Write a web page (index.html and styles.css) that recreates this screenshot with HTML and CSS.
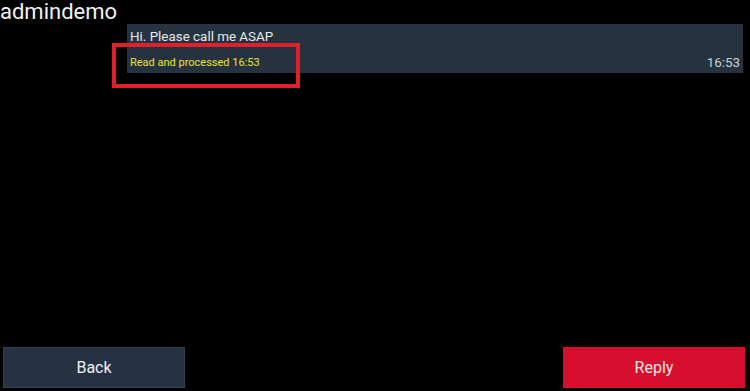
FILE: index.html
```html
<!DOCTYPE html>
<html lang="en">
<head>
    <meta charset="UTF-8">
    <meta name="viewport" content="width=device-width, initial-scale=1.0">
    <title>Message</title>
    <link rel="stylesheet" href="styles.css">
</head>
<body>
    <div class="screen">
        <h1 class="sender">admindemo</h1>

        <div class="thread">
            <div class="bubble">
                <div class="msg-text">Hi. Please call me ASAP</div>
                <div class="meta">
                    <span class="status">Read and processed 16:53</span>
                    <span class="time">16:53</span>
                </div>
                <!-- annotation box drawn over the status line -->
                <div class="highlight"></div>
            </div>
        </div>

        <div class="actions">
            <button class="btn btn-back">Back</button>
            <button class="btn btn-reply">Reply</button>
        </div>
    </div>
</body>
</html>
```

FILE: styles.css
```css
body {
    margin: 0;
    background-color: #000;
    font-family: Roboto, "Liberation Sans", Arial, sans-serif;
    color: #fff;
}
.screen {
    height: 391px;
    display: flex;
    flex-direction: column;
}
.sender {
    margin: 0;
    font-size: 22px;
    font-weight: normal;
    line-height: 24px;
    color: #f2f2f2;
}
.thread {
    padding: 0 7px 0 127px;
    flex: 1;
}
.bubble {
    position: relative;
    background-color: #27323f;
    padding: 4px 3px 3px 3px;
}
.msg-text {
    font-size: 13.4px;
    line-height: 17px;
    color: #e6e9ec;
}
.meta {
    display: flex;
    justify-content: space-between;
    align-items: flex-end;
    margin-top: 10px;
}
.status {
    font-size: 11px;
    line-height: 15px;
    color: #e8e62c;
}
.time {
    font-size: 13.4px;
    line-height: 15px;
    color: #c9d0d7;
}
.highlight {
    position: absolute;
    left: -15px;
    top: 19px;
    width: 180px;
    height: 37px;
    border: 4px solid #e2202b;
}
.actions {
    display: flex;
    justify-content: space-between;
    padding: 0 5px 3px 3px;
}
.btn {
    width: 182px;
    height: 41px;
    border: none;
    font-family: Roboto, "Liberation Sans", Arial, sans-serif;
    font-size: 16px;
    cursor: pointer;
}
.btn-back {
    background-color: #263241;
    border: 1px solid #34404e;
    color: #eef0f2;
}
.btn-reply {
    background-color: #d50f2d;
    color: #fbe3e6;
}
```
